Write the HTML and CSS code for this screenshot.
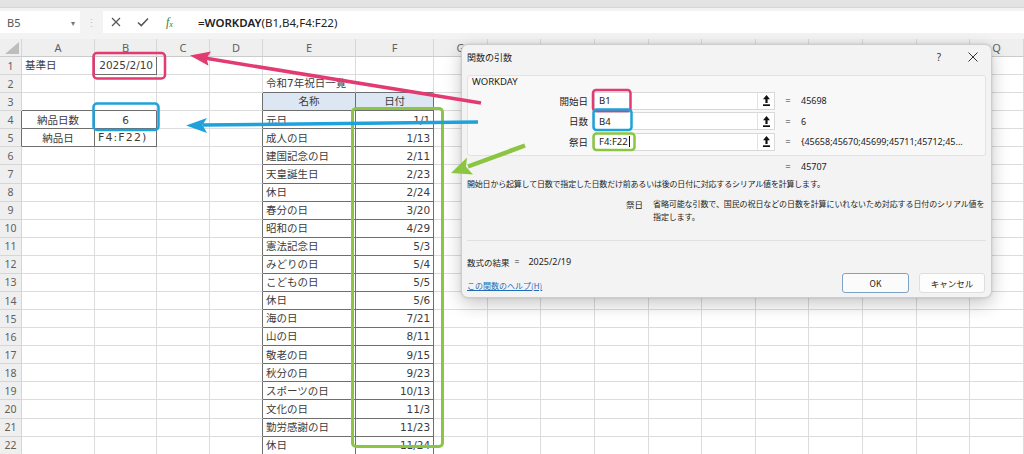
FILE: index.html
```html
<!DOCTYPE html>
<html lang="ja">
<head>
<meta charset="utf-8">
<title>WORKDAY</title>
<link rel="stylesheet" href="styles.css">
</head>
<body>
<div class="topstrip"></div>
<div class="fbar">
  <div class="namebox"><span>B5</span><span class="caret">▾</span></div>
  <div class="fsep">⋮</div>
  <div class="fbox">
    <svg class="ic-x" width="10" height="10" viewBox="0 0 10 10"><path d="M1 1L9 9M9 1L1 9" stroke="#555" stroke-width="1.2" fill="none"/></svg>
    <svg class="ic-ok" width="12" height="10" viewBox="0 0 12 10"><path d="M1 5.5L4.3 8.6L11 1.5" stroke="#555" stroke-width="1.5" fill="none"/></svg>
    <span class="ic-fx"><i>f</i><sub>x</sub></span>
    <span class="ftext"><b>=WORKDAY</b>(B1,B4,F4:F22)</span>
  </div>
</div>

<table class="sheet">
  <colgroup>
    <col class="c-rh"><col class="c-a"><col class="c-b"><col class="c-c"><col class="c-d"><col class="c-e"><col class="c-f">
    <col class="c-n"><col class="c-n"><col class="c-n"><col class="c-n"><col class="c-n"><col class="c-n"><col class="c-n"><col class="c-n"><col class="c-n"><col class="c-n"><col class="c-n">
  </colgroup>
  <tr class="hdr"><th class="corner"><svg width="14" height="12" viewBox="0 0 14 12"><polygon points="14,0 14,12 0,12" fill="#bdbdbd"/></svg></th><th>A</th><th class="bb">B</th><th>C</th><th>D</th><th>E</th><th>F</th><th>G</th><th>H</th><th>I</th><th>J</th><th>K</th><th>L</th><th>M</th><th>N</th><th>O</th><th>P</th><th>Q</th></tr>
  <tr><th>1</th><td class="br">基準日</td><td class="bd r">2025/2/10</td><td></td><td></td><td></td><td></td><td></td><td></td><td></td><td></td><td></td><td></td><td></td><td></td><td></td><td></td><td></td></tr>
  <tr><th>2</th><td></td><td></td><td></td><td></td><td class="bb">令和7年祝日一覧</td><td class="bb"></td><td></td><td></td><td></td><td></td><td></td><td></td><td></td><td></td><td></td><td></td><td></td></tr>
  <tr><th>3</th><td class="bb"></td><td class="bb"></td><td></td><td class="br"></td><td class="bd hd c">名称</td><td class="bd hd c">日付</td><td></td><td></td><td></td><td></td><td></td><td></td><td></td><td></td><td></td><td></td><td></td></tr>
  <tr><th class="br">4</th><td class="bd c">納品日数</td><td class="bd c">6</td><td></td><td class="br"></td><td class="bd">元日</td><td class="bd r">1/1</td><td></td><td></td><td></td><td></td><td></td><td></td><td></td><td></td><td></td><td></td><td></td></tr>
  <tr><th class="br">5</th><td class="bd c">納品日</td><td class="bd edit">F4:F22)</td><td></td><td class="br"></td><td class="bd">成人の日</td><td class="bd r">1/13</td><td></td><td></td><td></td><td></td><td></td><td></td><td></td><td></td><td></td><td></td><td></td></tr>
  <tr><th>6</th><td></td><td></td><td></td><td class="br"></td><td class="bd">建国記念の日</td><td class="bd r">2/11</td><td></td><td></td><td></td><td></td><td></td><td></td><td></td><td></td><td></td><td></td><td></td></tr>
  <tr><th>7</th><td></td><td></td><td></td><td class="br"></td><td class="bd">天皇誕生日</td><td class="bd r">2/23</td><td></td><td></td><td></td><td></td><td></td><td></td><td></td><td></td><td></td><td></td><td></td></tr>
  <tr><th>8</th><td></td><td></td><td></td><td class="br"></td><td class="bd">休日</td><td class="bd r">2/24</td><td></td><td></td><td></td><td></td><td></td><td></td><td></td><td></td><td></td><td></td><td></td></tr>
  <tr><th>9</th><td></td><td></td><td></td><td class="br"></td><td class="bd">春分の日</td><td class="bd r">3/20</td><td></td><td></td><td></td><td></td><td></td><td></td><td></td><td></td><td></td><td></td><td></td></tr>
  <tr><th>10</th><td></td><td></td><td></td><td class="br"></td><td class="bd">昭和の日</td><td class="bd r">4/29</td><td></td><td></td><td></td><td></td><td></td><td></td><td></td><td></td><td></td><td></td><td></td></tr>
  <tr><th>11</th><td></td><td></td><td></td><td class="br"></td><td class="bd">憲法記念日</td><td class="bd r">5/3</td><td></td><td></td><td></td><td></td><td></td><td></td><td></td><td></td><td></td><td></td><td></td></tr>
  <tr><th>12</th><td></td><td></td><td></td><td class="br"></td><td class="bd">みどりの日</td><td class="bd r">5/4</td><td></td><td></td><td></td><td></td><td></td><td></td><td></td><td></td><td></td><td></td><td></td></tr>
  <tr><th>13</th><td></td><td></td><td></td><td class="br"></td><td class="bd">こどもの日</td><td class="bd r">5/5</td><td></td><td></td><td></td><td></td><td></td><td></td><td></td><td></td><td></td><td></td><td></td></tr>
  <tr><th>14</th><td></td><td></td><td></td><td class="br"></td><td class="bd">休日</td><td class="bd r">5/6</td><td></td><td></td><td></td><td></td><td></td><td></td><td></td><td></td><td></td><td></td><td></td></tr>
  <tr><th>15</th><td></td><td></td><td></td><td class="br"></td><td class="bd">海の日</td><td class="bd r">7/21</td><td></td><td></td><td></td><td></td><td></td><td></td><td></td><td></td><td></td><td></td><td></td></tr>
  <tr><th>16</th><td></td><td></td><td></td><td class="br"></td><td class="bd">山の日</td><td class="bd r">8/11</td><td></td><td></td><td></td><td></td><td></td><td></td><td></td><td></td><td></td><td></td><td></td></tr>
  <tr><th>17</th><td></td><td></td><td></td><td class="br"></td><td class="bd">敬老の日</td><td class="bd r">9/15</td><td></td><td></td><td></td><td></td><td></td><td></td><td></td><td></td><td></td><td></td><td></td></tr>
  <tr><th>18</th><td></td><td></td><td></td><td class="br"></td><td class="bd">秋分の日</td><td class="bd r">9/23</td><td></td><td></td><td></td><td></td><td></td><td></td><td></td><td></td><td></td><td></td><td></td></tr>
  <tr><th>19</th><td></td><td></td><td></td><td class="br"></td><td class="bd">スポーツの日</td><td class="bd r">10/13</td><td></td><td></td><td></td><td></td><td></td><td></td><td></td><td></td><td></td><td></td><td></td></tr>
  <tr><th>20</th><td></td><td></td><td></td><td class="br"></td><td class="bd">文化の日</td><td class="bd r">11/3</td><td></td><td></td><td></td><td></td><td></td><td></td><td></td><td></td><td></td><td></td><td></td></tr>
  <tr><th>21</th><td></td><td></td><td></td><td class="br"></td><td class="bd">勤労感謝の日</td><td class="bd r">11/23</td><td></td><td></td><td></td><td></td><td></td><td></td><td></td><td></td><td></td><td></td><td></td></tr>
  <tr><th>22</th><td></td><td></td><td></td><td class="br"></td><td class="bd">休日</td><td class="bd r">11/24</td><td></td><td></td><td></td><td></td><td></td><td></td><td></td><td></td><td></td><td></td><td></td></tr>
</table>

<div class="dialog">
  <div class="dlg-title">
    <span>関数の引数</span>
    <span class="dlg-ctrls">
      <span class="help">?</span>
      <svg class="close" width="16" height="10" viewBox="0 0 16 10"><path d="M3.5 0.5L12.5 9.5M12.5 0.5L3.5 9.5" stroke="#333" stroke-width="1" fill="none"/></svg>
    </span>
  </div>
  <div class="group">
    <div class="group-name">WORKDAY</div>
    <div class="arg-row">
      <span class="arg-label">開始日</span>
      <span class="arg-input"><span class="arg-text">B1</span><span class="ref-btn"><svg width="7" height="11" viewBox="0 0 7 11"><polygon points="3.5,0 7,4.2 4.6,4.2 4.6,8 2.4,8 2.4,4.2 0,4.2" fill="#111"/><rect x="0" y="9.3" width="7" height="1.7" fill="#111"/></svg></span></span>
      <span class="eq">=</span>
      <span class="arg-val">45698</span>
    </div>
    <div class="arg-row">
      <span class="arg-label">日数</span>
      <span class="arg-input"><span class="arg-text">B4</span><span class="ref-btn"><svg width="7" height="11" viewBox="0 0 7 11"><polygon points="3.5,0 7,4.2 4.6,4.2 4.6,8 2.4,8 2.4,4.2 0,4.2" fill="#111"/><rect x="0" y="9.3" width="7" height="1.7" fill="#111"/></svg></span></span>
      <span class="eq">=</span>
      <span class="arg-val">6</span>
    </div>
    <div class="arg-row">
      <span class="arg-label">祭日</span>
      <span class="arg-input"><span class="arg-text">F4:F22<span class="cursor"></span></span><span class="ref-btn"><svg width="7" height="11" viewBox="0 0 7 11"><polygon points="3.5,0 7,4.2 4.6,4.2 4.6,8 2.4,8 2.4,4.2 0,4.2" fill="#111"/><rect x="0" y="9.3" width="7" height="1.7" fill="#111"/></svg></span></span>
      <span class="eq">=</span>
      <span class="arg-val">{45658;45670;45699;45711;45712;45...</span>
    </div>
  </div>
  <div class="result-line"><span class="eq">=</span><span class="arg-val">45707</span></div>
  <div class="desc">開始日から起算して日数で指定した日数だけ前あるいは後の日付に対応するシリアル値を計算します。</div>
  <div class="arg-desc">
    <span class="arg-desc-name">祭日</span>
    <span class="arg-desc-text">省略可能な引数で、国民の祝日などの日数を計算にいれないため対応する日付のシリアル値を指定します。</span>
  </div>
  <div class="sep"></div>
  <div class="formula-result"><span>数式の結果</span><span class="fr-eq">=</span><span class="fr-val">2025/2/19</span></div>
  <div class="dlg-foot">
    <a class="help-link" href="#">この関数のヘルプ(H)</a>
    <div class="btns">
      <button class="btn btn-ok">OK</button>
      <button class="btn btn-cancel">キャンセル</button>
    </div>
  </div>
</div>

<svg class="marks" width="1024" height="454" viewBox="0 0 1024 454">
  <g fill="none" stroke-linejoin="round">
    <rect x="93.5" y="53" width="71.5" height="25.5" rx="3.5" stroke="#e43a72" stroke-width="2.5"/>
    <rect x="93.5" y="103.5" width="65" height="26.5" rx="3.5" stroke="#1ea2dc" stroke-width="2.5"/>
    <rect x="352.5" y="108.5" width="90" height="338" rx="3.5" stroke="#8cc542" stroke-width="3"/>
    <rect x="593" y="90" width="37.5" height="21" rx="3" stroke="#e43a72" stroke-width="2.5"/>
    <rect x="593.5" y="109.5" width="38" height="20.5" rx="3" stroke="#1ea2dc" stroke-width="2.5"/>
    <rect x="593.5" y="133.5" width="41" height="16.5" rx="3" stroke="#8cc542" stroke-width="2.5"/>
    <line x1="481" y1="103" x2="206" y2="58.3" stroke="#e43a72" stroke-width="3.5"/>
    <line x1="478" y1="122" x2="203" y2="125" stroke="#1ea2dc" stroke-width="3.5"/>
    <line x1="525" y1="145.5" x2="468" y2="166.5" stroke="#8cc542" stroke-width="4.5"/>
  </g>
  <polygon points="190,55.5 211,51.5 206.5,58.3 208.5,65.8" fill="#e43a72"/>
  <polygon points="186,125.5 207,118 202.5,125 207,133" fill="#1ea2dc"/>
  <polygon points="451,173 467,157.5 466,166.8 473,174.5" fill="#8cc542"/>
</svg>
</body>
</html>
```
FILE: styles.css
```css
* { box-sizing: border-box; }
html, body { margin: 0; padding: 0; }
body {
  width: 1024px;
  height: 454px;
  overflow: hidden;
  position: relative;
  background: #ffffff;
  font-family: "Noto Sans CJK JP", sans-serif;
  color: #222;
}

/* ---------- ribbon edge + formula bar ---------- */
.topstrip {
  height: 8px;
  background: #e3e3e3;
  border-bottom: 1px solid #d6d6d6;
}
.fbar {
  display: flex;
  height: 31px;
  padding: 3px 0 6px;
  background: #f3f3f3;
}
.namebox {
  width: 80px;
  background: #fff;
  display: flex;
  align-items: center;
  justify-content: space-between;
  padding: 0 5px 0 7px;
  font-family: "Noto Sans", sans-serif;
  font-size: 11px;
  color: #555;
}
.caret { font-size: 8px; color: #777; }
.fsep {
  width: 23px;
  display: flex;
  align-items: center;
  justify-content: center;
  color: #c2c2c2;
  font-size: 11px;
}
.fbox {
  flex: 1;
  background: #fff;
  display: flex;
  align-items: center;
  padding-left: 8px;
}
.ic-ok { margin-left: 16px; }
.ic-fx {
  margin-left: 17px;
  width: 14px;
  font-family: "Liberation Serif", serif;
  color: #2e7d3e;
  font-size: 12px;
  line-height: 1;
}
.ic-fx sub { font-size: 8px; font-style: italic; vertical-align: -1px; }
.ftext {
  margin-left: 18px;
  font-family: "Noto Sans", sans-serif;
  font-size: 11.5px;
  color: #222;
  white-space: nowrap;
}
.ftext b { font-weight: 600; }

/* ---------- sheet grid ---------- */
.sheet {
  border-collapse: separate;
  border-spacing: 0;
  table-layout: fixed;
  width: 1024px;
  font-family: "DejaVu Sans", "Noto Sans CJK JP", sans-serif;
  font-size: 10.5px;
  color: #3c3c3c;
}
.c-rh { width: 22px; }
.c-a { width: 73px; }
.c-b { width: 62px; }
.c-c { width: 53px; }
.c-d { width: 53px; }
.c-e { width: 93px; }
.c-f { width: 78px; }
.c-n { width: 53.6px; }

.sheet tr { height: 18.08px; }
.sheet tr.hdr { height: 18px; }
.sheet th {
  background: #efefef;
  color: #606060;
  font-family: "Noto Sans", sans-serif;
  font-weight: normal;
  font-size: 10.5px;
  border-right: 1px solid #d6d6d6;
  border-bottom: 1px solid #d6d6d6;
  padding: 0;
  text-align: center;
  overflow: hidden;
  white-space: nowrap;
}
.sheet tr.hdr th { font-size: 11px; border-bottom-color: #cbcbcb; }
.sheet th.corner { text-align: right; vertical-align: bottom; padding: 0 2px 2px 0; line-height: 0; }
.sheet td {
  border-right: 1px solid #dcdcdc;
  border-bottom: 1px solid #dcdcdc;
  padding: 0 3px;
  white-space: nowrap;
  overflow: visible;
  line-height: 1;
}
.sheet .bd { border-right-color: #6e6e6e; border-bottom-color: #6e6e6e; }
.sheet .br { border-right-color: #6e6e6e; }
.sheet .bb { border-bottom-color: #6e6e6e; }
.sheet .r { text-align: right; }
.sheet .c { text-align: center; }
.sheet .hd { background: #dde7f3; }
.sheet .edit { letter-spacing: 1.1px; font-size: 11px; }

/* ---------- dialog ---------- */
.dialog {
  position: absolute;
  left: 461px;
  top: 44px;
  width: 531px;
  height: 254px;
  z-index: 2;
  background: #f3f3f3;
  border: 1px solid #cdcdcd;
  border-radius: 7px;
  box-shadow: 0 6px 18px rgba(0,0,0,0.22), 0 0 3px rgba(0,0,0,0.12);
  padding: 0 5px;
  display: flex;
  flex-direction: column;
  color: #222;
}
.dlg-title {
  height: 24px;
  display: flex;
  align-items: center;
  justify-content: space-between;
  font-size: 9px;
}
.dlg-ctrls { display: flex; align-items: center; gap: 18px; margin-right: 5px; }
.help { width: 16px; text-align: center; font-family: "Noto Sans", sans-serif; font-size: 10px; color: #333; }

.group {
  margin-top: 6px;
  height: 81px;
  background: #f8f8f8;
  border: 1px solid #e2e2e2;
  border-radius: 3px;
  padding: 0 0 0 4px;
}
.group-name {
  font-family: "Noto Sans", sans-serif;
  font-size: 9.5px;
  line-height: 12px;
}
.arg-row {
  display: grid;
  grid-template-columns: 116px 181px 14px 1fr;
  column-gap: 6px;
  align-items: center;
  height: 18px;
  margin-top: 2.5px;
}
.group-name + .arg-row { margin-top: 3.5px; }
.arg-label { text-align: right; font-size: 9.5px; }
.arg-input {
  height: 18px;
  background: #fff;
  border: 1px solid #d8d8d8;
  display: flex;
  align-items: center;
}
.arg-text {
  flex: 1;
  padding-left: 4px;
  font-family: "Noto Sans", sans-serif;
  font-size: 9.5px;
  display: flex;
  align-items: center;
}
.cursor { display: inline-block; width: 1px; height: 11px; background: #111; margin-left: 1px; }
.ref-btn {
  width: 17px;
  height: 100%;
  border-left: 1px solid #e2e2e2;
  display: flex;
  align-items: center;
  justify-content: center;
}
.eq { text-align: center; font-family: "Noto Sans", sans-serif; font-size: 9.5px; color: #333; }
.arg-val {
  font-family: "Noto Sans", sans-serif;
  font-size: 9px;
  color: #222;
  white-space: nowrap;
  overflow: hidden;
}

.result-line {
  margin-top: 4px;
  height: 12px;
  display: grid;
  grid-template-columns: 14px 1fr;
  column-gap: 6px;
  align-items: center;
  padding-left: 314px;
}
.desc {
  margin-top: 6px;
  font-size: 8px;
  line-height: 12px;
  white-space: nowrap;
  letter-spacing: -0.2px;
}
.arg-desc {
  margin-top: 8px;
  display: flex;
  padding-left: 159px;
  font-size: 8px;
  line-height: 12.5px;
}
.arg-desc-name { width: 27px; flex: none; font-size: 8.5px; }
.arg-desc-text { flex: 1; letter-spacing: -0.1px; }
.sep {
  margin-top: 17px;
  height: 1px;
  background: #e0e0e0;
  flex: none;
}
.formula-result {
  margin-top: 15px;
  line-height: 12px;
  font-size: 8.5px;
  display: flex;
  align-items: center;
}
.fr-eq { margin-left: 5px; font-family: "Noto Sans", sans-serif; }
.fr-val { margin-left: 9px; font-family: "Noto Sans", sans-serif; font-size: 9px; }
.dlg-foot {
  margin-top: 5px;
  display: flex;
  justify-content: space-between;
  align-items: flex-end;
}
.help-link {
  font-size: 8px;
  line-height: 12px;
  color: #1f6db6;
  text-decoration: underline;
  margin-bottom: 1px;
}
.btns { display: flex; gap: 10px; margin-right: 1px; }
.btn {
  height: 20px;
  font-family: "Noto Sans CJK JP", sans-serif;
  font-size: 8.5px;
  color: #222;
  border-radius: 3px;
  padding: 0;
}
.btn-ok { width: 67px; background: #fbfbfb; border: 1px solid #7fa3c4; }
.btn-cancel { width: 66px; background: #fdfdfd; border: 1px solid #dedede; }

/* ---------- annotation overlay ---------- */
.marks {
  position: absolute;
  left: 0;
  top: 0;
  z-index: 3;
  pointer-events: none;
}
```
